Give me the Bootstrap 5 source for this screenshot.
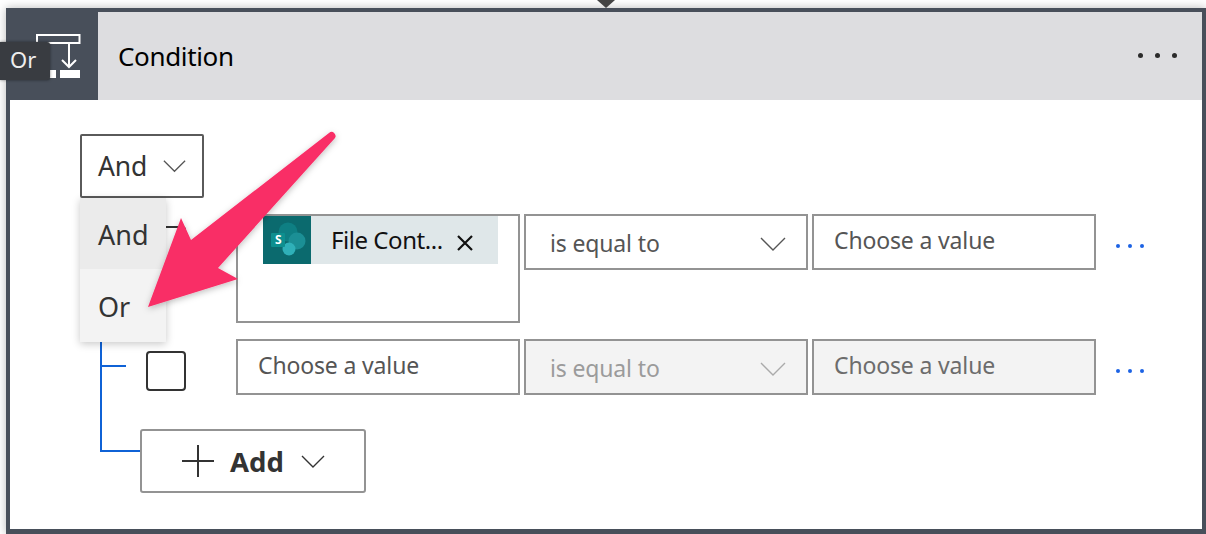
<!DOCTYPE html>
<html lang="en">
<head>
<meta charset="utf-8">
<title>Condition</title>
<link href="https://cdn.jsdelivr.net/npm/bootstrap@5.3.0/dist/css/bootstrap.min.css" rel="stylesheet">
<style>
html,body{height:534px;overflow:hidden;background:#fff}
body{font-family:"Noto Sans","Liberation Sans",sans-serif;color:#222;padding:8px 0 0 6px;position:relative}
.flow-card{height:526px;border:4px solid #484f5a;border-bottom-width:5px;border-right-width:4px;box-shadow:0 0 9px rgba(0,0,0,.28);background:#fff}
.flow-head{height:88px;background:#dddde0}
.flow-icon{width:88px;height:88px;background:#484f5a;margin-right:20px;flex:none}
.flow-title{font-size:26px;letter-spacing:-.35px;color:#000;line-height:1}
.head-dots{gap:12px;margin-right:25px;margin-top:-1px}
.head-dots i{width:5px;height:5px;border-radius:50%;background:#2b2b2b;display:block}
.flow-body{padding:34px 0 0 70px}
.logic-select{width:124px;height:64px;border:2px solid #5a5a5a;border-radius:2px;font-size:26.500px;letter-spacing:-.2px;padding:0 16px 0;color:#333;gap:16px}
.logic-select span{margin-top:1px}
.tree{margin-left:20px;width:1050px;padding-top:16px;padding-bottom:34px;border-left:2px solid #0f62d6;gap:16px}
.tree-row{gap:4px}
.branch{width:24px;height:2px;background:#0f62d6;margin-top:26px;margin-right:16px;flex:none}
.tick{width:40px;height:40px;border:2px solid #333;border-radius:4px;flex:none;margin-top:12px;margin-right:46px}
.r1 .branch{margin-top:12px}
.field{width:284px;flex:none;border:2px solid #939393;font-size:23px;letter-spacing:-.15px;color:#555;height:56px;padding-left:20px;line-height:1}
.field.token{height:109px;padding:0 0 0 25px;align-items:flex-start!important}
.chip{width:235px;height:48px;background:#dfe7e9;color:#111;font-size:24px;letter-spacing:-.45px}
.chip-ic{width:48px;height:48px;background:#0b6a6e;flex:none;margin-right:20px}
.chip-x{margin:6px 0 0 13px}
.op{padding-left:24px;justify-content:space-between;padding-right:20px;padding-top:3px}
.off{background:#f3f3f3;color:#9b9b9b}
.val{padding-bottom:4px}
.val.off{color:#6c6c6c}
.more{gap:8px;margin-left:16px;height:56px;padding-top:8px}
.more i{width:4px;height:4px;border-radius:50%;background:#1c62e4;display:block}
.add-row{margin-left:20px}
.stem{width:40px;height:23px;border-left:2px solid #0f62d6;border-bottom:2px solid #0f62d6;flex:none}
.add-btn{width:226px;height:64px;border:2px solid #939393;border-radius:3px;font-size:27.500px;font-weight:700;color:#333;background:#fff;gap:16px;padding-left:40px}
.add-btn span{margin-top:1px}
.add-btn svg:last-child{margin-left:1px}
.menu-pop{position:absolute;left:80px;top:198px;width:86px;font-size:27px;box-shadow:0 2px 8px rgba(0,0,0,.22);color:#333}
.menu-pop div{padding-left:18px;padding-top:4px;display:flex;align-items:center}
.menu-pop .on{background:#ebebeb;height:71px}
.menu-pop .alt{background:#f3f3f3;height:73px}
.tip-or{position:absolute;left:0;top:42px;width:50px;height:38px;background:#393c41;color:#eee;font-size:22px;border-radius:0 3px 3px 0;box-shadow:0 0 3px rgba(0,0,0,.5);padding:0 0 4px 10px;display:flex;align-items:center}
.top-caret{position:absolute;left:597px;top:0}
.pink-arrow{position:absolute;left:0;top:0;pointer-events:none}
</style>
</head>
<body>
<div class="flow-card d-flex flex-column">
  <div class="flow-head d-flex align-items-center">
    <div class="flow-icon d-flex align-items-center justify-content-center">
      <svg width="88" height="88" viewBox="0 0 88 88" fill="none">
        <path d="M27 23H69.500V31H27Z" stroke="#fff" stroke-width="2"/>
        <path d="M27 31V58M59 31V55M52 48L59 55L66 48" stroke="#fff" stroke-width="2"/>
        <rect x="27" y="58" width="19" height="8" fill="#fff"/>
        <rect x="50" y="58" width="20" height="8" fill="#fff"/>
      </svg>
    </div>
    <div class="flow-title">Condition</div>
    <div class="head-dots d-flex ms-auto"><i></i><i></i><i></i></div>
  </div>
  <div class="flow-body">
    <div class="logic-select d-flex align-items-center"><span>And</span>
      <svg width="26" height="14" viewBox="0 0 26 14" fill="none"><path d="M1 1L13 13L25 1" stroke="#555" stroke-width="1.400"/></svg>
    </div>
    <div class="tree d-flex flex-column">
      <div class="tree-row r1 d-flex align-items-start">
        <span class="branch"></span><span class="tick"></span>
        <div class="field token d-flex">
          <div class="chip d-flex align-items-center">
            <span class="chip-ic">
              <svg width="48" height="48" viewBox="0 0 48 48">
                <circle cx="25" cy="16" r="9.500" fill="#0e7f83"/>
                <circle cx="34" cy="25" r="8.500" fill="#1b8f95"/>
                <circle cx="26" cy="33" r="6.500" fill="#2fb0b8"/>
                <rect x="8" y="17" width="14" height="14" rx="1" fill="#0d8f8f"/>
                <text x="15" y="28" font-family="Noto Sans, sans-serif" font-size="12" font-weight="700" fill="#fff" text-anchor="middle">S</text>
              </svg>
            </span>
            <span>File Cont...</span>
            <svg class="chip-x" width="18" height="18" viewBox="0 0 18 18" fill="none"><path d="M2 2L16 16M16 2L2 16" stroke="#111" stroke-width="2.200"/></svg>
          </div>
        </div>
        <div class="field op d-flex align-items-center">is equal to
          <svg width="26" height="14" viewBox="0 0 26 14" fill="none"><path d="M1 1L13 13L25 1" stroke="#555" stroke-width="1.400"/></svg>
        </div>
        <div class="field val d-flex align-items-center">Choose a value</div>
        <div class="more d-flex align-items-center"><i></i><i></i><i></i></div>
      </div>
      <div class="tree-row d-flex align-items-start">
        <span class="branch"></span><span class="tick"></span>
        <div class="field val d-flex align-items-center">Choose a value</div>
        <div class="field op off d-flex align-items-center">is equal to
          <svg width="26" height="14" viewBox="0 0 26 14" fill="none"><path d="M1 1L13 13L25 1" stroke="#aaa" stroke-width="1.400"/></svg>
        </div>
        <div class="field val off d-flex align-items-center">Choose a value</div>
        <div class="more d-flex align-items-center"><i></i><i></i><i></i></div>
      </div>
    </div>
    <div class="add-row d-flex align-items-start">
      <span class="stem"></span>
      <button type="button" class="add-btn d-flex align-items-center">
        <svg width="32" height="32" viewBox="0 0 32 32" fill="none"><path d="M0 16H32M16 0V32" stroke="#333" stroke-width="2"/></svg>
        <span>Add</span>
        <svg width="24" height="13" viewBox="0 0 24 13" fill="none"><path d="M1 1L12 12L23 1" stroke="#333" stroke-width="1.400"/></svg>
      </button>
    </div>
  </div>
</div>
<div class="menu-pop"><div class="on">And</div><div class="alt">Or</div></div>
<svg class="top-caret" width="18" height="8" viewBox="0 0 18 8"><path d="M0 0H18L9 8Z" fill="#444"/></svg>
<div class="tip-or">Or</div>
<svg class="pink-arrow" width="1206" height="534" viewBox="0 0 1206 534">
  <defs><filter id="sh" x="-20%" y="-20%" width="140%" height="140%"><feDropShadow dx="0" dy="2" stdDeviation="3" flood-color="#000" flood-opacity=".25"/></filter></defs>
  <path d="M333 132Q337 135 335 138L218 268L238 279L148 307L181 218L191 240L329 133Q331 131 333 132Z" fill="#f92d66" filter="url(#sh)"/>
</svg>
<script src="https://cdn.jsdelivr.net/npm/bootstrap@5.3.0/dist/js/bootstrap.bundle.min.js"></script>
</body>
</html>
